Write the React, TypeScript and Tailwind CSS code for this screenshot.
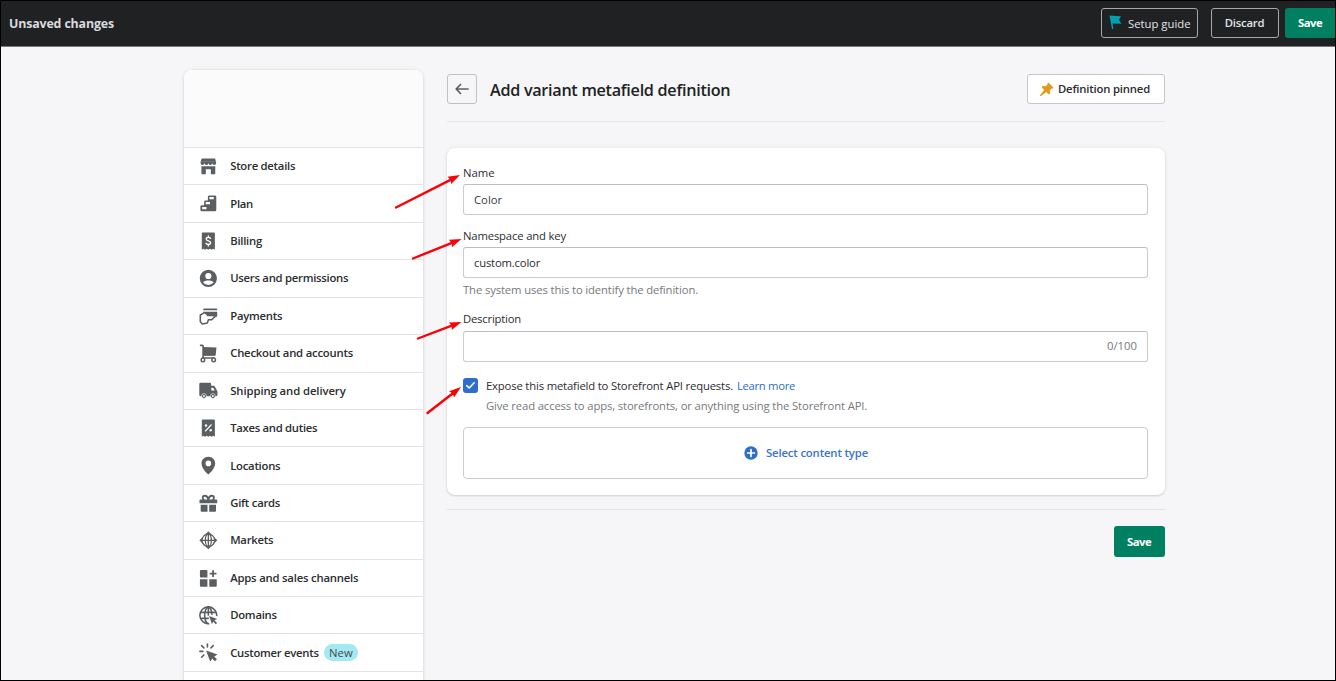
import type { ReactNode } from 'react';

type NavItem = { label: string; tracking: string; icon: ReactNode; badge?: string };

const NAV: NavItem[] = [
  {
    label: 'Store details',
    tracking: 'tracking-[-0.25px]',
    icon: (
      <>
        <path d="M3.4 1.5h13.2a1 1 0 0 1 .9.8l.5 2.5H2l.5-2.500a1 1 0 0 1 .9-.8z" />
        <path d="M1.700 4.500h16.600v2a2 2 0 0 1-4.100 0 2 2 0 0 1-4.200 0 2 2 0 0 1-4.200 0 2 2 0 0 1-4.100 0z" />
        <path d="M2.600 9.800h14.800V17.600a.9.9 0 0 1-.9.9H12.700V13.200H7.300v5.300H3.500a.9.9 0 0 1-.9-.9z" />
      </>
    ),
  },
  {
    label: 'Plan',
    tracking: 'tracking-[-0.25px]',
    icon: (
      <path
        fillRule="evenodd"
        d="M11 1.500h6a1.500 1.500 0 0 1 1.500 1.500v14a1.500 1.500 0 0 1-1.500 1.500H3A1.500 1.500 0 0 1 1.500 17v-3.500A1.500 1.500 0 0 1 3 12h2.500V8.500A1.500 1.500 0 0 1 7 7h2.500V3A1.500 1.500 0 0 1 11 1.500zM11.200 3.300v2.400h4.600V3.300zM7.200 8.600v2.400h4.600V8.600zM3.400 13.900v2.400H8v-2.400z"
      />
    ),
  },
  {
    label: 'Billing',
    tracking: 'tracking-[-0.25px]',
    icon: (
      <>
        <path d="M3 1.500A1 1 0 0 1 4 .5h12a1 1 0 0 1 1 1V19l-1.750-1.200L13.500 19l-1.750-1.200L10 19l-1.750-1.200L6.500 19l-1.750-1.200L3 19z" />
        <path
          d="M12.300 6.800C11.900 6 11.100 5.700 10 5.700c-1.400 0-2.300.7-2.300 1.800 0 2.700 4.700 1.200 4.700 4 0 1.200-1 1.900-2.400 1.900-1.200 0-2.100-.4-2.500-1.300M10 4.200v1.500M10 13.400v1.500"
          fill="none"
          stroke="#fff"
          strokeWidth="1.500"
          strokeLinecap="round"
        />
      </>
    ),
  },
  {
    label: 'Users and permissions',
    tracking: 'tracking-[-0.26px]',
    icon: (
      <path
        fillRule="evenodd"
        d="M10 .8a9.200 9.200 0 1 0 0 18.400A9.200 9.200 0 0 0 10 .8zm0 3.400a3.300 3.300 0 1 1 0 6.600 3.300 3.300 0 0 1 0-6.600zM4.300 14.200c1-1.500 3.400-2 5.700-2s4.700.5 5.700 2A7.300 7.300 0 0 1 10 17.200a7.300 7.300 0 0 1-5.700-3z"
      />
    ),
  },
  {
    label: 'Payments',
    tracking: 'tracking-[-0.25px]',
    icon: (
      <>
        <path d="M5.500 1.500h13a1 1 0 0 1 1 1v1.100h-15V2.500a1 1 0 0 1 1-1zM4.500 5h15v4.400a1.200 1.200 0 0 1-1.200 1.200H12V9H4.500z" />
        <path
          d="M5.400 6.300 1.400 8.500V15.800l2.300 2.400 5.200-1 1.200-3.600h3.500l2.900-2.700V9H8.500"
          fill="#fff"
          stroke="#5c5f62"
          strokeWidth="1.700"
          strokeLinejoin="round"
        />
      </>
    ),
  },
  {
    label: 'Checkout and accounts',
    tracking: 'tracking-[-0.2px]',
    icon: (
      <>
        <path d="M4.500 3.100 18.700 3.800l-.8 7.600a1 1 0 0 1-1 .9H4.500z" />
        <path
          d="M1.700 1.400H3.400a1 1 0 0 1 1 1V15h11.400M4.400 11.700h12"
          fill="none"
          stroke="#5c5f62"
          strokeWidth="1.800"
          strokeLinecap="round"
        />
        <circle cx="4.200" cy="17" r="1.900" fill="#fff" stroke="#5c5f62" strokeWidth="1.600" />
        <circle cx="15.700" cy="17" r="1.900" fill="#fff" stroke="#5c5f62" strokeWidth="1.600" />
      </>
    ),
  },
  {
    label: 'Shipping and delivery',
    tracking: 'tracking-[-0.08px]',
    icon: (
      <>
        <path
          fillRule="evenodd"
          d="M2 2h9.500a1.500 1.500 0 0 1 1.500 1.500v1.700h2.600a1.500 1.500 0 0 1 1.300.8l2.600 4.600c.2.300.3.600.3 1V14.800a1.500 1.500 0 0 1-1.500 1.500H2A1.500 1.500 0 0 1 .3 14.800V3.500A1.500 1.500 0 0 1 2 2zm11.200 5.200v3.100h3.700l-1.700-3.100z"
        />
        <circle cx="5.300" cy="16" r="2.600" stroke="#fff" strokeWidth=".6" />
        <circle cx="14.800" cy="16" r="2.600" stroke="#fff" strokeWidth=".6" />
        <circle cx="5.300" cy="16" r="1" fill="#fff" />
        <circle cx="14.800" cy="16" r="1" fill="#fff" />
      </>
    ),
  },
  {
    label: 'Taxes and duties',
    tracking: 'tracking-[-0.29px]',
    icon: (
      <>
        <path d="M3 1.500A1 1 0 0 1 4 .5h12a1 1 0 0 1 1 1V19l-1.750-1.200L13.500 19l-1.750-1.200L10 19l-1.750-1.200L6.500 19l-1.750-1.200L3 19z" />
        <path d="M13 6.300 7 12.700" stroke="#fff" strokeWidth="1.500" strokeLinecap="round" />
        <circle cx="7.500" cy="7" r="1.300" fill="#fff" />
        <circle cx="12.500" cy="12" r="1.300" fill="#fff" />
      </>
    ),
  },
  {
    label: 'Locations',
    tracking: 'tracking-[-0.25px]',
    icon: (
      <path
        fillRule="evenodd"
        d="M10 .7c-4 0-7.300 3-7.300 7.100 0 5.100 4.700 9.900 6.600 11.400.4.300 1 .3 1.400 0 1.900-1.500 6.600-6.300 6.600-11.400C17.300 3.700 14 .7 10 .7zm0 4.200a3 3 0 1 1 0 6 3 3 0 0 1 0-6z"
      />
    ),
  },
  {
    label: 'Gift cards',
    tracking: 'tracking-[-0.25px]',
    icon: (
      <>
        <path
          d="M10 6.500C9.500 3.500 8 1.900 6.300 1.900 4.800 1.900 4 3 4 4.100c0 1 .6 1.900 1.500 2.400M10 6.500c.5-3 2-4.600 3.700-4.600C15.200 1.900 16 3 16 4.100c0 1-.6 1.900-1.500 2.400"
          fill="none"
          stroke="#5c5f62"
          strokeWidth="2"
        />
        <path d="M1.500 5.800h17a1 1 0 0 1 1 1v2.200a1 1 0 0 1-1 1H1.500a1 1 0 0 1-1-1V6.800a1 1 0 0 1 1-1zM1.800 11.500h7.300V19H2.800a1 1 0 0 1-1-1zM10.900 11.500h7.300V18a1 1 0 0 1-1 1h-6.300z" />
      </>
    ),
  },
  {
    label: 'Markets',
    tracking: 'tracking-[-0.25px]',
    icon: (
      <>
        <g fill="none" stroke="#5c5f62" strokeWidth="1.400">
          <circle cx="10" cy="10" r="6.800" />
          <ellipse cx="10" cy="10" rx="3.200" ry="6.800" />
          <path d="M3 10h14M10 3v14" />
        </g>
        <path d="M10 .4 13 3.500H7zM10 19.600 7 16.500h6zM.4 10 3.500 7v6zM19.600 10 16.500 13V7z" />
      </>
    ),
  },
  {
    label: 'Apps and sales channels',
    tracking: 'tracking-[-0.2px]',
    icon: (
      <path d="M2 1H8a1 1 0 0 1 1 1V9H2a1 1 0 0 1-1-1V2a1 1 0 0 1 1-1zM1 11H9v8H2a1 1 0 0 1-1-1zM11 11h8v7a1 1 0 0 1-1 1H11zM14.100 1.300h1.900v2.700h2.700v1.900h-2.700v2.700h-1.900V5.900h-2.700V4h2.700z" />
    ),
  },
  {
    label: 'Domains',
    tracking: 'tracking-[-0.25px]',
    icon: (
      <>
        <g fill="none" stroke="#5c5f62" strokeWidth="1.700">
          <path d="M18.900 10.800A9 9 0 1 0 11 18.900" />
          <path d="M14 9.500C13.800 4.800 12 1.200 10 1.200S6 5 6 10s2 8.800 4 8.800M1.800 6.800h16.400M1.800 13.200h8.700M10 1.400v9" />
        </g>
        <path d="m10.800 10.800 8.700 3.200-3 1.300 2.800 2.800-1.300 1.300-2.800-2.800-1.300 2.900z" />
      </>
    ),
  },
  {
    label: 'Customer events',
    tracking: 'tracking-[-0.27px]',
    badge: 'New',
    icon: (
      <>
        <path d="m7.600 8 12.200 4.200-3.500 2.300 2.900 2.900-2.200 2.200-2.900-2.900-2.100 3.500z" />
        <path
          d="M9 1v3.200M2.800 2.800l2.400 2.400M1 9h3.200M5.200 12.800l-2.400 2.400M12.800 5.200l2.400-2.400"
          stroke="#5c5f62"
          strokeWidth="1.700"
          strokeLinecap="round"
        />
      </>
    ),
  },
];

const ARROWS = [
  { x1: 395, y1: 206.5, x2: 459, y2: 174 },
  { x1: 412, y1: 257.5, x2: 460.5, y2: 238 },
  { x1: 417, y1: 337.5, x2: 460.5, y2: 321 },
  { x1: 426.5, y1: 412, x2: 460, y2: 386 },
];

function Annotations() {
  return (
    <svg className="pointer-events-none absolute top-0 left-0" width="1336" height="681" viewBox="0 0 1336 681">
      {ARROWS.map((a) => {
        const angle = (Math.atan2(a.y2 - a.y1, a.x2 - a.x1) * 180) / Math.PI;
        const length = Math.hypot(a.x2 - a.x1, a.y2 - a.y1);
        return (
          <g key={a.y1} transform={`translate(${a.x2} ${a.y2}) rotate(${angle})`}>
            <path d={`M${-length} 0H-9`} stroke="#fb0007" strokeWidth="2.400" strokeLinecap="round" />
            <path d="M0 0-12-4-10.500 0-12 4z" fill="#fb0007" />
          </g>
        );
      })}
    </svg>
  );
}

function TopBar() {
  return (
    <header className="flex h-[46px] shrink-0 items-start border-b border-[#77797b] bg-[#202123] pt-[7px] pl-2">
      <h1 className="text-[12.4px] leading-[31px] font-bold tracking-[-0.15px] text-[#d9dbdd]">Unsaved changes</h1>
      <button className="ml-auto flex h-[30px] w-[97px] items-center rounded-[3px] border border-[#a6a8aa] pl-[7px] text-[#e3e5e7]">
        <svg width="13" height="15" viewBox="0 0 13 15" className="mr-[6px] -mt-[1px]">
          <path d="M.5.600 12 1.300l-2 3.400 2.400 4L3.600 8.600 4.400 13.800l-1.400.2z" fill="#00a0ac" />
        </svg>
        <span className="pt-0.5">Setup guide</span>
      </button>
      <button className="ml-[13px] h-[30px] w-[68px] rounded-[3px] border border-[#a6a8aa] pr-[1px] text-center font-semibold tracking-[-0.22px] text-[#e3e5e7]">
        Discard
      </button>
      <button className="ml-[6px] h-[30px] w-[50px] rounded-l-[3px] bg-[#008060] text-center font-bold tracking-[-0.5px] text-white">
        Save
      </button>
    </header>
  );
}

function Sidebar() {
  return (
    <aside className="mt-[23px] h-[640px] w-[239px] shrink-0 rounded-t-lg bg-white shadow-[0_0_4px_rgba(23,24,24,0.08),0_1px_3px_rgba(0,0,0,0.1)]">
      <div className="h-[77px] rounded-t-lg bg-[#fbfbfb]" />
      <nav className="flex flex-col">
        {NAV.map((item) => (
          <a key={item.label} className="flex h-[37.43px] items-center border-t border-[#e1e3e5] pl-[15px] font-semibold text-[#2b2d2f]">
            <svg width="18.700" height="18.700" viewBox="0 0 20 20" fill="#5c5f62" className="shrink-0">
              {item.icon}
            </svg>
            <span className={`ml-[12.5px] ${item.tracking}`}>{item.label}</span>
            {item.badge && (
              <span className="ml-[5px] flex h-[17px] w-[34.5px] items-center justify-center rounded-full bg-[#a4e8f2] font-normal text-[#3f4a4d]">
                {item.badge}
              </span>
            )}
          </a>
        ))}
        <div className="border-t border-[#e1e3e5]" />
      </nav>
    </aside>
  );
}

const INPUT = 'flex h-[31px] items-center rounded-[3px] border border-[#c9cccf] border-t-[#bcbfc3] bg-white px-[10px]';

function DefinitionForm() {
  return (
    <section className="mt-[26px] h-[347px] rounded-lg bg-white px-[16.5px] pt-[16px] shadow-[0_0_4px_rgba(23,24,24,0.08),0_1px_2px_rgba(0,0,0,0.12)]">
      <div className="h-[20px] leading-[18px]">Name</div>
      <div className={INPUT}>
        <span className="text-[#3a3c3e]">Color</span>
      </div>
      <div className="mt-[12px] h-[20px] leading-[18px] tracking-[-0.17px]">Namespace and key</div>
      <div className={INPUT}>
        <span className="tracking-[-0.2px]">custom.color</span>
      </div>
      <p className="mt-[3px] h-[18px] leading-[18px] tracking-[-0.13px] text-[#76797d]">
        The system uses this to identify the definition.
      </p>
      <div className="mt-[11px] h-[21px] leading-[18px] tracking-[-0.21px]">Description</div>
      <div className={INPUT}>
        <span className="ml-auto -mt-[1px] text-[#76797d]">0/100</span>
      </div>
      <div className="mt-[14px] flex h-[18px] items-center">
        <span className="flex size-[15px] items-center justify-center rounded-[3px] bg-[#2c6ecb]">
          <svg width="11" height="9" viewBox="0 0 11 9" fill="none" stroke="#fff" strokeWidth="1.600" strokeLinecap="round" strokeLinejoin="round">
            <path d="M1.700 4.600 4.200 7 9.200 1.800" />
          </svg>
        </span>
        <span className="ml-[8px] pt-px tracking-[-0.17px]">Expose this metafield to Storefront API requests.</span>
        <a className="ml-[4px] pt-px tracking-[-0.32px] text-[#2c6ecb]">Learn more</a>
      </div>
      <p className="mt-[3px] ml-[23px] h-[18px] leading-[18px] tracking-[-0.135px] text-[#76797d]">
        Give read access to apps, storefronts, or anything using the Storefront API.
      </p>
      <button className="mt-[12px] flex h-[52px] w-full items-center justify-center rounded-[4px] border border-[#c9cccf] pl-px font-semibold text-[#3a74cc]">
        <svg width="14" height="14" viewBox="0 0 14 14" className="mr-[8px]">
          <circle cx="7" cy="7" r="6.700" fill="#2c6ecb" />
          <path d="M7 3.600v6.800M3.600 7h6.800" stroke="#fff" strokeWidth="1.700" strokeLinecap="round" />
        </svg>
        <span className="tracking-[-0.14px]">Select content type</span>
      </button>
    </section>
  );
}

export default function App() {
  return (
    <div className="relative flex h-[681px] w-[1336px] flex-col overflow-hidden border border-black bg-[#f6f6f8] font-['Open_Sans','Noto_Sans',sans-serif] text-[11.3px] leading-[16px] text-[#2b2d2f]">
      <TopBar />
      <div className="flex min-h-0 flex-1 pl-[183px]">
        <Sidebar />
        <main className="ml-[23.5px] w-[718px] pt-[27px]">
          <div className="flex h-[48px] items-start border-b border-[#e6e7e9]">
            <button className="flex size-[30px] items-center justify-center rounded-[3px] border border-[#bfc2c5]">
              <svg width="14" height="12" viewBox="0 0 14 12" fill="none" stroke="#5c5f62" strokeWidth="1.700" strokeLinecap="round" strokeLinejoin="round">
                <path d="M13 6H1.500M5.500 1.500 1.200 6l4.300 4.500" />
              </svg>
            </button>
            <h2 className="ml-[13.5px] text-[16.2px] leading-[33px] font-semibold tracking-[-0.29px] text-[#202223]">
              Add variant metafield definition
            </h2>
            <button className="ml-auto flex h-[30px] w-[137.5px] items-center rounded-[3px] border border-[#c3c6ca] bg-white pl-[11px] font-semibold">
              <svg width="15" height="15" viewBox="0 0 15 15" className="mr-[4px]">
                <path
                  d="M8.600 1.200a.9.900 0 0 1 1.300-.1l4 4a.9.900 0 0 1-.5 1.500l-1.100.1-1.600 2 .3 2.500a1 1 0 0 1-1.700.8L7.200 9.900 1.700 14.300.800 13.400 5.200 7.900 3.100 5.800a1 1 0 0 1 .8-1.700l2.600.2L8.400 2.700z"
                  fill="#e19a18"
                />
              </svg>
              <span className="tracking-[-0.18px]">Definition pinned</span>
            </button>
          </div>
          <DefinitionForm />
          <div className="mt-[14px] flex justify-end border-t border-[#e1e3e5] pt-[16px]">
            <button className="h-[31px] w-[51px] rounded-[3px] bg-[#008060] text-center font-bold tracking-[-0.5px] text-white">
              Save
            </button>
          </div>
        </main>
      </div>
      <Annotations />
    </div>
  );
}
